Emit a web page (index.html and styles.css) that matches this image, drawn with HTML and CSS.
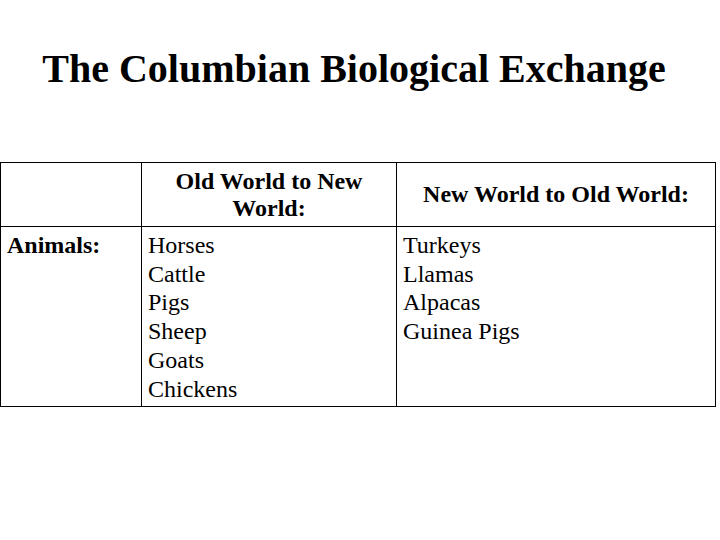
FILE: index.html
```html
<!DOCTYPE html>
<html>
<head>
<meta charset="utf-8">
<link rel="stylesheet" href="styles.css">
</head>
<body>
<h1 class="title">The Columbian Biological Exchange</h1>
<table class="exchange">
  <colgroup>
    <col class="c1">
    <col class="c2">
    <col class="c3">
  </colgroup>
  <tr class="head">
    <th></th>
    <th>Old World to New World:</th>
    <th>New World to Old World:</th>
  </tr>
  <tr class="body">
    <th class="label">Animals:</th>
    <td>Horses<br>Cattle<br>Pigs<br>Sheep<br>Goats<br>Chickens</td>
    <td>Turkeys<br>Llamas<br>Alpacas<br>Guinea Pigs</td>
  </tr>
</table>
</body>
</html>
```
FILE: styles.css
```css
html, body {
  margin: 0;
  padding: 0;
  background: #fff;
  color: #000;
  font-family: "Liberation Serif", "Times New Roman", serif;
}
.title {
  margin: 0;
  padding: 46px 12px 0 0;
  height: 162px;
  box-sizing: border-box;
  font-size: 40px;
  font-weight: bold;
  line-height: 46px;
  text-align: center;
}
.exchange {
  border-collapse: collapse;
  table-layout: fixed;
  width: 715px;
  font-size: 24px;
}
.c1 { width: 141px; }
.c2 { width: 255px; }
.c3 { width: 319px; }
.exchange th,
.exchange td {
  border: 1px solid #000;
  padding: 0 6px;
}
.head th {
  height: 63px;
  font-weight: bold;
  line-height: 27px;
  text-align: center;
  vertical-align: middle;
  padding: 0 26px;
}
.body th,
.body td {
  height: 175px;
  vertical-align: top;
  text-align: left;
  line-height: 28.7px;
  padding-top: 4px;
  padding-bottom: 0;
}
.body .label {
  font-weight: bold;
}
.body td {
  font-weight: normal;
}
```
